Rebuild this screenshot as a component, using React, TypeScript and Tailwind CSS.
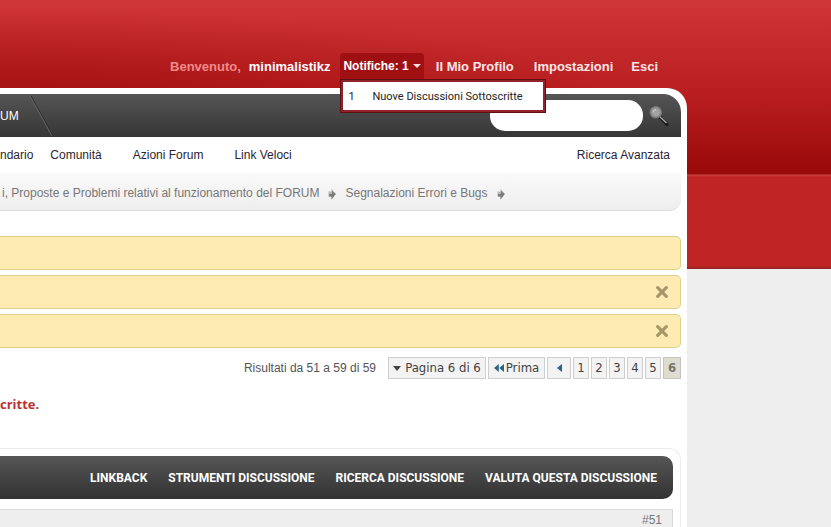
import React from 'react';

const ARIAL = "font-['Liberation_Sans',sans-serif]";
const TAHOMA = "font-['DejaVu_Sans_Condensed','DejaVu_Sans',sans-serif]";

const pages = ['1', '2', '3', '4', '5'];
const threadTools = ['LINKBACK', 'STRUMENTI DISCUSSIONE', 'RICERCA DISCUSSIONE', 'VALUTA QUESTA DISCUSSIONE'];

const BreadcrumbArrow: React.FC = () => (
  <svg className="mt-0.5 h-3 w-2" viewBox="0 0 8 12">
    <path d="M0.5 3.5 H3.5 V0.5 L7.8 6 L3.5 11.5 V8.5 H0.5 Z" fill="#b9b9b9" />
    <path d="M1 6 H4 V3 L7.8 6 L3.5 11.5 V8.5 H1 Z" fill="#7c7c7c" />
  </svg>
);

const CloseIcon: React.FC = () => (
  <svg className="h-3 w-3" viewBox="0 0 12 12">
    <path d="M1.7 1.7 L10.3 10.3 M10.3 1.7 L1.7 10.3" stroke="#a6976a" strokeWidth="3.2" strokeLinecap="round" />
  </svg>
);

const SearchIcon: React.FC = () => (
  <svg className="h-5 w-5" viewBox="0 0 20 20">
    <path d="M10.5 11 L18 18.5" stroke="#171717" strokeWidth="3" strokeLinecap="round" />
    <path d="M10.5 10.5 L17.5 17" stroke="#a8a8a8" strokeWidth="1.3" />
    <circle cx="6.8" cy="6.3" r="5.8" fill="#8d8d8d" stroke="#767676" />
    <circle cx="6.8" cy="6.3" r="3.8" fill="#a3a3a3" />
    <path d="M4 6.3 A3 3 0 0 1 7 3.5" stroke="#cccccc" fill="none" />
  </svg>
);

const UserBar: React.FC = () => (
  <header className="mr-36 flex h-[88px] items-start justify-end whitespace-nowrap pr-[29px] pt-[53px] text-[13px] font-bold leading-7 text-[#fbe6e6]">
    <span className="mr-2 text-[#f08a8a]">Benvenuto,</span>
    <a href="#" className="mr-2.5 text-white">minimalistikz</a>
    <div className="relative mr-3">
      <button className="flex h-[26px] items-center gap-1 rounded-t bg-[#a01012] px-[3px] text-xs font-bold text-white">
        Notifiche: 1
        <svg className="h-1 w-2" viewBox="0 0 8 4">
          <path d="M0 0 H8 L4 4 Z" fill="#ffdcdc" />
        </svg>
      </button>
      <div className="absolute left-0 top-[26px] z-10 border border-[#5c1012] bg-[#92232a] p-0.5">
        <a
          href="#"
          className="flex h-7 w-[200px] items-center bg-white pl-[5px] pt-0.5 font-[Roboto,sans-serif] text-[11px] font-normal text-[#222222]"
        >
          <span className="w-6">1</span>
          Nuove Discussioni Sottoscritte
        </a>
      </div>
    </div>
    <a href="#" className="mr-5">Il Mio Profilo</a>
    <a href="#" className="mr-[18px]">Impostazioni</a>
    <a href="#">Esci</a>
  </header>
);

const NavBar: React.FC = () => (
  <nav className="flex h-[43px] items-center justify-between rounded-tr-[18px] bg-linear-to-b from-[#555555] to-[#363636] pr-3">
    <div className="flex items-center">
      <a href="#" className="w-[30px] text-xs text-white">UM</a>
      <svg className="h-[43px] w-6" viewBox="0 0 24 43">
        <path d="M1 2 L23 42" stroke="#2c2c2c" fill="none" />
        <path d="M0 2 L22 42" stroke="#666666" fill="none" />
      </svg>
    </div>
    <form className="flex items-center gap-1.5">
      <input
        type="text"
        aria-label="Cerca"
        className="h-[31px] w-[153px] rounded-[15px] bg-white px-3 text-xs text-gray-800 outline-none"
      />
      <button type="button" aria-label="Avvia ricerca">
        <SearchIcon />
      </button>
    </form>
  </nav>
);

const Notice: React.FC<{ closable?: boolean }> = ({ closable }) => (
  <div className="flex h-[34px] items-center justify-end rounded-r-[5px] border border-l-0 border-[#dcd08c] bg-[#feebb3] pr-3">
    {closable && (
      <button aria-label="Chiudi">
        <CloseIcon />
      </button>
    )}
  </div>
);

const Pagination: React.FC = () => (
  <div className="mt-[9px] flex h-[22px] items-center justify-end whitespace-nowrap text-xs text-[#555555]">
    <span className="mr-3">Risultati da 51 a 59 di 59</span>
    <div className={`flex gap-0.5 text-[13px] text-[#424242] ${TAHOMA}`}>
      <button className="flex h-[22px] w-[98px] items-center justify-center gap-1 border border-[#cfcfcf] bg-[#f3f3f3]">
        <svg className="h-[5px] w-2" viewBox="0 0 8 5">
          <path d="M0 0 H8 L4 5 Z" fill="#424242" />
        </svg>
        Pagina 6 di 6
      </button>
      <a href="#" className="flex h-[22px] w-[57px] items-center justify-center gap-0.5 border border-[#cfcfcf] bg-[#f3f3f3]">
        <svg className="h-2 w-2.5" viewBox="0 0 10 8">
          <path d="M4.8 0 V8 L0 4 Z M10 0 V8 L5.2 4 Z" fill="#2c6486" />
        </svg>
        Prima
      </a>
      <a
        href="#"
        aria-label="Precedente"
        className="flex h-[22px] w-6 items-center justify-center border border-[#cfcfcf] bg-[#f3f3f3]"
      >
        <svg className="h-2 w-[5px]" viewBox="0 0 5 8">
          <path d="M5 0 V8 L0 4 Z" fill="#2c6486" />
        </svg>
      </a>
      {pages.map((page) => (
        <a
          key={page}
          href="#"
          className="flex h-[22px] w-4 items-center justify-center border border-[#cfcfcf] bg-[#f3f3f3]"
        >
          {page}
        </a>
      ))}
      <span className="flex h-[22px] w-[18px] items-center justify-center border border-[#c4c4bc] bg-[#dfddd2] font-bold text-[#77756a]">
        6
      </span>
    </div>
  </div>
);

const Thread: React.FC = () => (
  <section className="grow rounded-tr-xl border-r border-t border-[#ececec] pr-[7px] pt-[7px]">
    <div className="flex h-[43px] items-center justify-end gap-[21px] whitespace-nowrap rounded-r-[10px] bg-linear-to-b from-[#565656] to-[#323232] pr-4 font-[Roboto,sans-serif] text-xs font-bold text-white">
      {threadTools.map((tool) => (
        <a key={tool} href="#">{tool}</a>
      ))}
    </div>
    <div className="mt-2.5 flex h-[30px] items-start justify-end border-r border-t border-[#dadada] bg-[#eeeeee] pr-2.5 pt-0.5 text-xs text-[#777777]">
      <a href="#">#51</a>
    </div>
  </section>
);

export default function App() {
  return (
    <div
      className={`h-screen overflow-hidden bg-[linear-gradient(to_bottom,#cf3638_0,#b71c1e_100px,#980909_174px,#cc4444_175px,#bf2525_177px,#bf2525_266px,#8d2626_269px,#eeeeee_269px)] ${ARIAL}`}
    >
      <div className="bg-[radial-gradient(ellipse_75%_90px_at_0_100px,#96060699,#96060600)] bg-no-repeat">
        <UserBar />
        <main className="mr-36 flex min-h-[460px] flex-col rounded-tr-[20px] bg-white pr-1.5 pt-1.5">
          <NavBar />
          <nav className="flex h-9 items-center justify-between whitespace-nowrap pr-[11px] text-xs text-[#2c2430]">
            <div className="flex">
              <a href="#" className="mr-[17px]">ndario</a>
              <a href="#" className="mr-[31px]">Comunità</a>
              <a href="#" className="mr-[31px]">Azioni Forum</a>
              <a href="#">Link Veloci</a>
            </div>
            <a href="#">Ricerca Avanzata</a>
          </nav>
          <div className="flex h-[38px] items-center gap-[9px] whitespace-nowrap rounded-br-xl border-b border-[#dddddd] bg-linear-to-b from-[#fafafa] to-[#eeeeee] pl-0.5 pt-0.5 text-xs text-[#777777]">
            <a href="#">i, Proposte e Problemi relativi al funzionamento del FORUM</a>
            <BreadcrumbArrow />
            <a href="#">Segnalazioni Errori e Bugs</a>
            <BreadcrumbArrow />
          </div>
          <div className="mt-[25px] flex flex-col gap-[5px]">
            <Notice />
            <Notice closable />
            <Notice closable />
          </div>
          <Pagination />
          <h1 className="mb-[34px] mt-[15px] font-['Open_Sans',sans-serif] text-[13px] font-bold leading-5 text-[#b83236]">critte.</h1>
          <Thread />
        </main>
      </div>
    </div>
  );
}
